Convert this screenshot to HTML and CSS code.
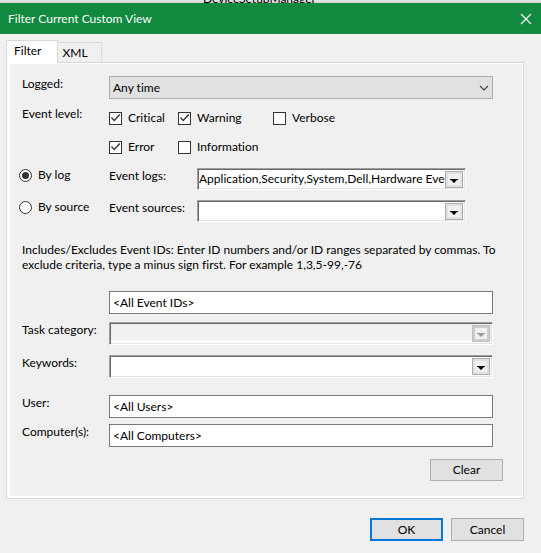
FILE: index.html
```html
<!DOCTYPE html>
<html lang="en">
<head>
    <meta charset="UTF-8">
    <meta name="viewport" content="width=device-width, initial-scale=1.0">
    <title>Filter Current Custom View</title>
    <link rel="stylesheet" href="styles.css">
</head>
<body>
    <div class="backdrop"><span class="backdrop-text">DeviceSetupManager</span></div>

    <header class="title-bar">
        <h1>Filter Current Custom View</h1>
        <button class="close-btn" type="button" aria-label="Close">
            <svg width="12" height="12" viewBox="0 0 12 12"><path d="M1 1l10 10M11 1L1 11" stroke="#fff" stroke-width="1.1" fill="none"/></svg>
        </button>
    </header>

    <form class="dialog">
        <div class="tabs" role="tablist">
            <button class="tab active" type="button" role="tab" aria-selected="true">Filter</button>
            <button class="tab" type="button" role="tab" aria-selected="false">XML</button>
        </div>

        <div class="panel">
            <div class="row logged">
                <label class="name" for="logged">Logged:</label>
                <div class="select-box">
                    <select id="logged">
                        <option>Any time</option>
                    </select>
                    <svg class="chevron" width="10" height="6" viewBox="0 0 10 6"><path d="M1 1l4 4 4-4" stroke="#444" stroke-width="1.2" fill="none"/></svg>
                </div>
            </div>

            <div class="row levels">
                <span class="name">Event level:</span>
                <div class="checks">
                    <label class="choice"><input type="checkbox" checked>Critical</label>
                    <label class="choice"><input type="checkbox" checked>Warning</label>
                    <label class="choice"><input type="checkbox">Verbose</label>
                    <label class="choice"><input type="checkbox" checked>Error</label>
                    <label class="choice"><input type="checkbox">Information</label>
                </div>
            </div>

            <div class="row source">
                <label class="choice by"><input type="radio" name="by" checked>By log</label>
                <label class="name" for="logs">Event logs:</label>
                <div class="combo">
                    <input type="text" id="logs" value="Application,Security,System,Dell,Hardware Events">
                    <button type="button" aria-label="Show event logs"><svg width="8" height="4" viewBox="0 0 8 4"><path d="M0 0h8v1H7L4 4 1 1H0z"/></svg></button>
                </div>
            </div>

            <div class="row source">
                <label class="choice by"><input type="radio" name="by">By source</label>
                <label class="name" for="sources">Event sources:</label>
                <div class="combo">
                    <input type="text" id="sources">
                    <button type="button" aria-label="Show event sources"><svg width="8" height="4" viewBox="0 0 8 4"><path d="M0 0h8v1H7L4 4 1 1H0z"/></svg></button>
                </div>
            </div>

            <p class="help" id="ids-help">Includes/Excludes Event IDs: Enter ID numbers and/or ID ranges separated by commas. To exclude criteria, type a minus sign first. For example 1,3,5-99,-76</p>

            <div class="row">
                <span class="name"></span>
                <input class="text-box" type="text" aria-label="Event IDs" aria-describedby="ids-help" value="&lt;All Event IDs&gt;">
            </div>

            <div class="row task">
                <label class="name" for="task">Task category:</label>
                <div class="combo disabled">
                    <input type="text" id="task" disabled>
                    <button type="button" aria-label="Show task categories" disabled><svg width="8" height="4" viewBox="0 0 8 4"><path d="M0 0h8v1H7L4 4 1 1H0z"/></svg></button>
                </div>
            </div>

            <div class="row keywords">
                <label class="name" for="keywords">Keywords:</label>
                <div class="combo">
                    <input type="text" id="keywords">
                    <button type="button" aria-label="Show keywords"><svg width="8" height="4" viewBox="0 0 8 4"><path d="M0 0h8v1H7L4 4 1 1H0z"/></svg></button>
                </div>
            </div>

            <div class="row">
                <label class="name" for="user">User:</label>
                <input class="text-box" type="text" id="user" value="&lt;All Users&gt;">
            </div>

            <div class="row">
                <label class="name" for="computer">Computer(s):</label>
                <input class="text-box" type="text" id="computer" value="&lt;All Computers&gt;">
            </div>

            <div class="clear-row">
                <button class="btn" type="reset">Clear</button>
            </div>
        </div>

        <div class="actions">
            <button class="btn default" type="submit">OK</button>
            <button class="btn" type="button">Cancel</button>
        </div>
    </form>
</body>
</html>
```
FILE: styles.css
```css
* {
    box-sizing: border-box;
}

body {
    margin: 0;
    min-height: 100vh;
    background-color: #f0f0f0;
    color: #000;
    font-family: "Segoe UI", Lato, sans-serif;
    font-size: 12px;
    line-height: 16px;
    font-variant-ligatures: none;
}

input,
select,
button {
    margin: 0;
    padding: 0;
    border: none;
    border-radius: 0;
    color: inherit;
    font: inherit;
    font-variant-ligatures: none;
}

/* window behind the dialog */
.backdrop {
    display: flex;
    align-items: flex-end;
    height: 3px;
    padding-left: 203px;
    overflow: hidden;
    background: linear-gradient(#e8e8e8, #cfcfcf);
}

.backdrop-text {
    margin-bottom: -4px;
}

.title-bar {
    display: flex;
    align-items: center;
    justify-content: space-between;
    height: 31px;
    padding: 0 9px 0 8px;
    background-color: #11893e;
    color: #fff;
}

.title-bar h1 {
    margin: 0;
    font-size: 12px;
    font-weight: normal;
}

.close-btn {
    display: flex;
    background: none;
}

.dialog {
    padding: 6px 17px 12px 6px;
}

.tabs {
    display: flex;
    align-items: flex-end;
}

.tab {
    height: 20px;
    padding: 0 13px 0 4px;
    border: 1px solid #d9d9d9;
    border-width: 1px 1px 0 0;
    background-color: #f0f0f0;
}

/* covers the top edge of the panel */
.tab.active {
    position: relative;
    height: 23px;
    margin-bottom: -1px;
    padding: 0 16px 3px 7px;
    border-width: 1px 1px 0 1px;
    background-color: #fff;
}

.panel {
    padding: 13px 30px 17px 12px;
    border: 1px solid #d9d9d9;
    box-shadow: inset 3px 1px #fff, inset -1px -2px #fff;
}

.row {
    display: flex;
    align-items: flex-start;
    margin-bottom: 6px;
    padding-left: 3px;
}

.name {
    flex: none;
    width: 87px;
}

.logged {
    margin-bottom: 7px;
}

.select-box {
    position: relative;
    flex: 1;
}

.select-box select {
    display: block;
    width: 100%;
    height: 23px;
    padding-left: 3px;
    border: 1px solid #adadad;
    background-color: #e1e1e1;
    appearance: none;
}

.chevron {
    position: absolute;
    top: 9px;
    right: 4px;
    pointer-events: none;
}

.levels {
    margin-bottom: 13px;
}

.checks {
    display: grid;
    grid-template-columns: 69px 95px auto;
    row-gap: 13px;
    padding-top: 4px;
}

.choice {
    display: flex;
    align-items: center;
    gap: 6px;
}

.choice input {
    display: flex;
    align-items: center;
    justify-content: center;
    flex: none;
    width: 13px;
    height: 13px;
    border: 1px solid #333;
    background-color: #fff;
    appearance: none;
}

.choice input[type="checkbox"]:checked::before {
    content: "";
    width: 11px;
    height: 11px;
    background-color: #333;
    clip-path: polygon(9% 50%, 18% 42%, 38% 64%, 84% 14%, 94% 23%, 38% 82%);
}

.choice input[type="radio"] {
    border-radius: 50%;
}

.choice input[type="radio"]:checked::before {
    content: "";
    width: 7px;
    height: 7px;
    border-radius: 50%;
    background-color: #333;
}

.source {
    margin-bottom: 10px;
    padding: 0 27px 0 0;
}

.by {
    width: 90px;
    height: 14px;
}

.source .name {
    width: 88px;
}

/* sunken combo box */
.combo {
    display: flex;
    flex: 1;
    min-width: 0;
    height: 22px;
    padding-right: 2px;
    border: 1px solid;
    border-color: #a0a0a0 #fff #fff #a0a0a0;
    background-color: #fff;
    box-shadow: inset 1px 1px #696969, inset -1px -1px #e3e3e3;
}

.combo input {
    flex: 1;
    min-width: 0;
    height: 18px;
    padding-left: 1px;
    background: none;
}

.combo button {
    display: flex;
    align-items: center;
    justify-content: center;
    width: 18px;
    height: 17px;
    margin-top: 2px;
    padding-top: 2px;
    border: 1px solid #adadad;
    background-color: #f0f0f0;
    box-shadow: inset 0 0 0 2px #e1e1e1;
}

.combo.disabled {
    background-color: #f0f0f0;
    box-shadow: inset 1px 1px #696969, inset -1px -1px #e3e3e3, inset 0 -4px #fff;
}

.combo.disabled button {
    border-color: #bfbfbf;
    box-shadow: inset 0 0 0 2px #ccc;
    fill: #9a9a9a;
}

.help {
    margin: 20px -10px 19px 0;
    padding-left: 3px;
    line-height: 15px;
}

.text-box {
    flex: 1;
    min-width: 0;
    height: 23px;
    padding: 0 3px;
    border: 1px solid #7a7a7a;
    background-color: #fff;
}

.task {
    margin: 8px 0 10px;
}

.keywords {
    margin-bottom: 17px;
}

.task .combo,
.keywords .combo {
    height: 23px;
}

.clear-row {
    display: flex;
    justify-content: flex-end;
    margin: 12px -10px 0 0;
}

.btn {
    width: 73px;
    height: 22px;
    border: 1px solid #adadad;
    background-color: #e1e1e1;
}

.btn.default {
    border: 2px solid #0078d7;
}

.actions {
    display: flex;
    justify-content: flex-end;
    gap: 8px;
    margin-top: 19px;
}

.actions .btn {
    height: 23px;
}
```
